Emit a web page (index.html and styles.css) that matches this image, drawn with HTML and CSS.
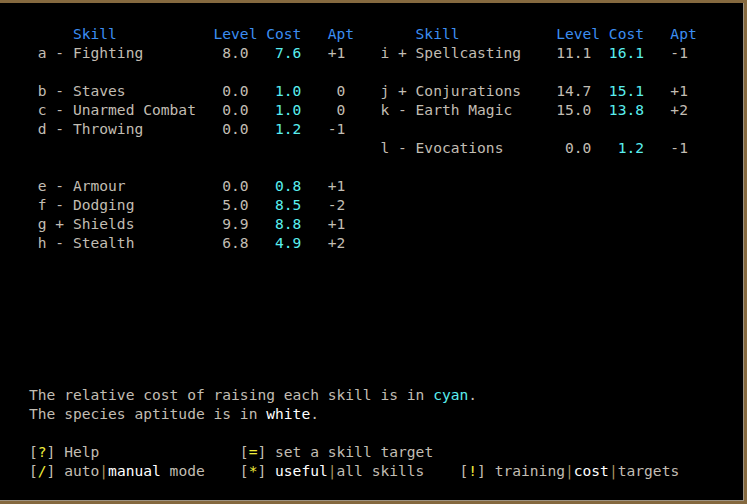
FILE: index.html
```html
<!DOCTYPE html>
<html>
<head>
<meta charset="utf-8">
<link rel="stylesheet" href="styles.css">
</head>
<body>
<div class="frame">
  <div class="skills">
    <div class="list">
      <div class="sk head"><span class="key"></span><span class="name">Skill</span><span class="lvl">Level</span><span class="cost">Cost</span><span class="apt">Apt</span></div>
      <div class="sk"><span class="key">a - </span><span class="name">Fighting</span><span class="lvl">8.0</span><span class="cost">7.6</span><span class="apt">+1</span></div>
      <div class="sk"></div>
      <div class="sk"><span class="key">b - </span><span class="name">Staves</span><span class="lvl">0.0</span><span class="cost">1.0</span><span class="apt">0</span></div>
      <div class="sk"><span class="key">c - </span><span class="name">Unarmed Combat</span><span class="lvl">0.0</span><span class="cost">1.0</span><span class="apt">0</span></div>
      <div class="sk"><span class="key">d - </span><span class="name">Throwing</span><span class="lvl">0.0</span><span class="cost">1.2</span><span class="apt">-1</span></div>
      <div class="sk"></div>
      <div class="sk"></div>
      <div class="sk"><span class="key">e - </span><span class="name">Armour</span><span class="lvl">0.0</span><span class="cost">0.8</span><span class="apt">+1</span></div>
      <div class="sk"><span class="key">f - </span><span class="name">Dodging</span><span class="lvl">5.0</span><span class="cost">8.5</span><span class="apt">-2</span></div>
      <div class="sk"><span class="key">g + </span><span class="name">Shields</span><span class="lvl">9.9</span><span class="cost">8.8</span><span class="apt">+1</span></div>
      <div class="sk"><span class="key">h - </span><span class="name">Stealth</span><span class="lvl">6.8</span><span class="cost">4.9</span><span class="apt">+2</span></div>
    </div>
    <div class="list">
      <div class="sk head"><span class="key"></span><span class="name">Skill</span><span class="lvl">Level</span><span class="cost">Cost</span><span class="apt">Apt</span></div>
      <div class="sk"><span class="key">i + </span><span class="name">Spellcasting</span><span class="lvl">11.1</span><span class="cost">16.1</span><span class="apt">-1</span></div>
      <div class="sk"></div>
      <div class="sk"><span class="key">j + </span><span class="name">Conjurations</span><span class="lvl">14.7</span><span class="cost">15.1</span><span class="apt">+1</span></div>
      <div class="sk"><span class="key">k - </span><span class="name">Earth Magic</span><span class="lvl">15.0</span><span class="cost">13.8</span><span class="apt">+2</span></div>
      <div class="sk"></div>
      <div class="sk"><span class="key">l - </span><span class="name">Evocations</span><span class="lvl">0.0</span><span class="cost">1.2</span><span class="apt">-1</span></div>
    </div>
  </div>
  <div class="footer">
    <div class="line">The relative cost of raising each skill is in <span class="cyan">cyan</span>.</div>
    <div class="line">The species aptitude is in <span class="white">white</span>.</div>
    <div class="line"></div>
    <div class="cmds">
      <span>[<span class="yel">?</span>] Help</span>
      <span>[<span class="yel">=</span>] set a skill target</span>
      <span></span>
      <span>[<span class="yel">/</span>] auto<span class="pipe">|</span><span class="white">manual</span> mode</span>
      <span>[<span class="yel">*</span>] <span class="white">useful</span><span class="pipe">|</span>all skills</span>
      <span>[<span class="yel">!</span>] training<span class="pipe">|</span><span class="white">cost</span><span class="pipe">|</span>targets</span>
    </div>
  </div>
</div>
</body>
</html>
```
FILE: styles.css
```css
html, body {
  margin: 0;
  padding: 0;
  background: #000;
}
body {
  width: 747px;
  height: 504px;
  overflow: hidden;
}
.frame {
  box-sizing: border-box;
  width: 747px;
  height: 504px;
  border-top: 3px solid #85693f;
  border-right: 3px solid #85693f;
  border-bottom: 3px solid #85693f;
  box-shadow: inset -1px -1px 0 #9c9282;
  padding: 21px 0 21px 29px;
  display: flex;
  flex-direction: column;
  font-family: "DejaVu Sans Mono", "Liberation Mono", monospace;
  font-size: 14.6px;
  line-height: 19px;
  color: #c2bdb3;
  white-space: pre;
}
.skills {
  display: grid;
  grid-template-columns: 39ch 39ch;
  margin-left: 1ch;
}
.list {
  display: flex;
  flex-direction: column;
}
.sk {
  display: flex;
  height: 19px;
}
.sk .key { width: 4ch; }
.sk .name { width: 16ch; }
.sk .lvl { width: 4ch; text-align: right; }
.sk .cost { width: 4ch; margin-left: 2ch; text-align: right; color: #5aefef; }
.sk .apt { width: 2ch; margin-left: 3ch; text-align: right; }
.sk.head span {
  color: #3c8ef2;
  text-align: left;
  overflow: visible;
}
.footer {
  margin-top: auto;
  display: flex;
  flex-direction: column;
}
.line {
  height: 19px;
}
.cmds {
  display: grid;
  grid-template-columns: 24ch 25ch auto;
  grid-auto-rows: 19px;
}
.cyan { color: #5aefef; }
.white { color: #ffffff; }
.yel { color: #f2ee3c; }
.pipe { color: #a8925f; }
```
